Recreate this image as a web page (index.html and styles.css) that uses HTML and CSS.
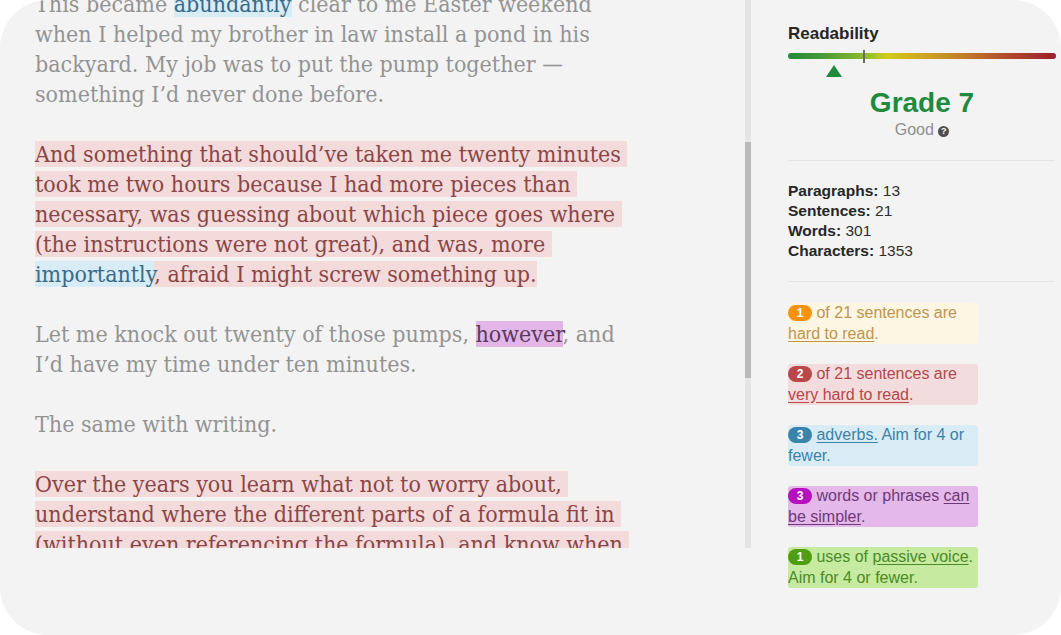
FILE: index.html
```html
<!DOCTYPE html>
<html lang="en">
<head>
<meta charset="utf-8">
<title>Readability</title>
<link rel="stylesheet" href="styles.css">
</head>
<body>
<div class="app">
  <div class="editor">
    <div class="doc">
      <p>This became <span class="adv">abundantly</span> clear to me Easter weekend<br>when I helped my brother in law install a pond in his<br>backyard. My job was to put the pump together —<br>something I’d never done before.</p>
      <p><span class="vhard">And something that should’ve taken me twenty minutes&nbsp;<br>took me two hours because I had more pieces than&nbsp;<br>necessary, was guessing about which piece goes where&nbsp;<br>(the instructions were not great), and was, more&nbsp;<br><span class="adv">importantly</span>, afraid I might screw something up.</span></p>
      <p>Let me knock out twenty of those pumps, <span class="simple">however</span>, and<br>I’d have my time under ten minutes.</p>
      <p>The same with writing.</p>
      <p><span class="vhard">Over the years you learn what not to worry about,&nbsp;<br>understand where the different parts of a formula fit in&nbsp;<br>(without even referencing the formula), and know when&nbsp;<br>to stop.</span></p>
    </div>
  </div>
  <div class="scroll"><div class="thumb"></div></div>
  <aside class="side">
    <h2 class="title">Readability</h2>
    <div class="meter"><div class="tick"></div></div>
    <div class="pointer"></div>
    <div class="grade">Grade 7</div>
    <div class="good">Good <span class="help">?</span></div>
    <div class="rule"></div>
    <div class="stats">
      <div><b>Paragraphs:</b> 13</div>
      <div><b>Sentences:</b> 21</div>
      <div><b>Words:</b> 301</div>
      <div><b>Characters:</b> 1353</div>
    </div>
    <div class="rule"></div>
    <div class="notes">
      <div class="note n-hard"><span class="badge">1</span> of 21 sentences are <u>hard to read</u>.</div>
      <div class="note n-vhard"><span class="badge">2</span> of 21 sentences are <u>very hard to read</u>.</div>
      <div class="note n-adv"><span class="badge">3</span> <u>adverbs.</u> Aim for 4 or fewer.</div>
      <div class="note n-simple"><span class="badge">3</span> words or phrases <u>can be simpler</u>.</div>
      <div class="note n-passive"><span class="badge">1</span> uses of <u>passive voice</u>. Aim for 4 or fewer.</div>
    </div>
  </aside>
</div>
</body>
</html>
```
FILE: styles.css
```css
html, body {
  margin: 0;
  padding: 0;
  background: #ffffff;
}
.app {
  width: 1061px;
  height: 635px;
  background: #f3f3f3;
  border-radius: 48px;
  display: flex;
  overflow: hidden;
}
.editor {
  width: 745px;
  height: 548px;
  overflow: hidden;
  flex: none;
}
.doc {
  margin-top: -11px;
  padding-left: 35px;
  font-family: "DejaVu Serif", Georgia, serif;
  font-stretch: condensed;
  font-size: 23px;
  line-height: 30px;
  color: #939393;
  white-space: nowrap;
}
.doc p {
  margin: 0 0 30px 0;
}
.vhard {
  background: #f3dbdc;
  color: #8a4646;
  padding: 0;
}
.adv {
  background: #d8ecf6;
  color: #3b6a88;
  padding: 0;
}
.simple {
  background: #e3b6e8;
  color: #5a3a5c;
  padding: 0;
}
.scroll {
  width: 6px;
  height: 548px;
  background: #e4e4e4;
  flex: none;
  display: flex;
  flex-direction: column;
}
.thumb {
  margin-top: 142px;
  height: 236px;
  background: #b9b9b9;
}
.side {
  flex: none;
  width: 268px;
  padding: 24px 5px 0 37px;
  font-family: "Liberation Sans", Arial, sans-serif;
  display: flex;
  flex-direction: column;
}
.title {
  margin: 0;
  font-size: 17px;
  line-height: 20px;
  font-weight: bold;
  color: #262626;
}
.meter {
  margin-top: 9px;
  height: 6px;
  border-radius: 3px;
  background: linear-gradient(to right, #23883a 0%, #4a9c36 14%, #8bbb2c 28%, #d2cb1e 37%, #cfa620 50%, #c38227 64%, #b1512b 80%, #9e1d2b 100%);
  position: relative;
}
.tick {
  position: absolute;
  left: 75px;
  top: -3px;
  width: 2px;
  height: 13px;
  background: #6b6b6b;
}
.pointer {
  margin: 6px 0 0 38px;
  width: 0;
  height: 0;
  border-left: 8px solid transparent;
  border-right: 8px solid transparent;
  border-bottom: 12px solid #1f8a3b;
}
.grade {
  margin-top: 11px;
  text-align: center;
  font-size: 28px;
  line-height: 30px;
  font-weight: bold;
  color: #1f8a3b;
}
.good {
  margin-top: 2px;
  text-align: center;
  font-size: 16px;
  line-height: 20px;
  color: #8e8e8e;
}
.help {
  display: inline-block;
  width: 11px;
  height: 11px;
  border-radius: 50%;
  background: #4f4f4f;
  color: #ffffff;
  font-size: 9px;
  line-height: 11px;
  font-weight: bold;
  text-align: center;
  vertical-align: 1px;
}
.rule {
  height: 1px;
  background: #e4e4e4;
  margin: 20px 2px 0 0;
}
.stats {
  margin: 20px 0 0 0;
  font-size: 15.5px;
  line-height: 20px;
  color: #2e2e2e;
}
.stats b {
  color: #262626;
}
.notes {
  margin-top: 21px;
  display: flex;
  flex-direction: column;
  gap: 20px;
}
.note {
  width: 190px;
  height: 41px;
  box-sizing: border-box;
  border-radius: 3px;
  font-size: 16px;
  line-height: 20.5px;
}
.note u {
  text-decoration: underline;
  text-underline-offset: 2px;
}
.badge {
  display: inline-block;
  width: 24px;
  height: 16px;
  border-radius: 8px;
  color: #ffffff;
  font-size: 12px;
  line-height: 16px;
  font-weight: bold;
  text-align: center;
  vertical-align: 1px;
}
.n-hard { background: #fdf6e3; color: #c0954f; }
.n-hard .badge { background: #f7920c; }
.n-vhard { background: #f3dcdd; color: #b5474a; }
.n-vhard .badge { background: #bb4849; }
.n-adv { background: #d9ecf6; color: #3a82a8; }
.n-adv .badge { background: #3a84aa; }
.n-simple { background: #e4b8e9; color: #6d3a78; }
.n-simple .badge { background: #b512bd; }
.n-passive { background: #c5eaa0; color: #4c8a27; }
.n-passive .badge { background: #4f9d10; }
```
